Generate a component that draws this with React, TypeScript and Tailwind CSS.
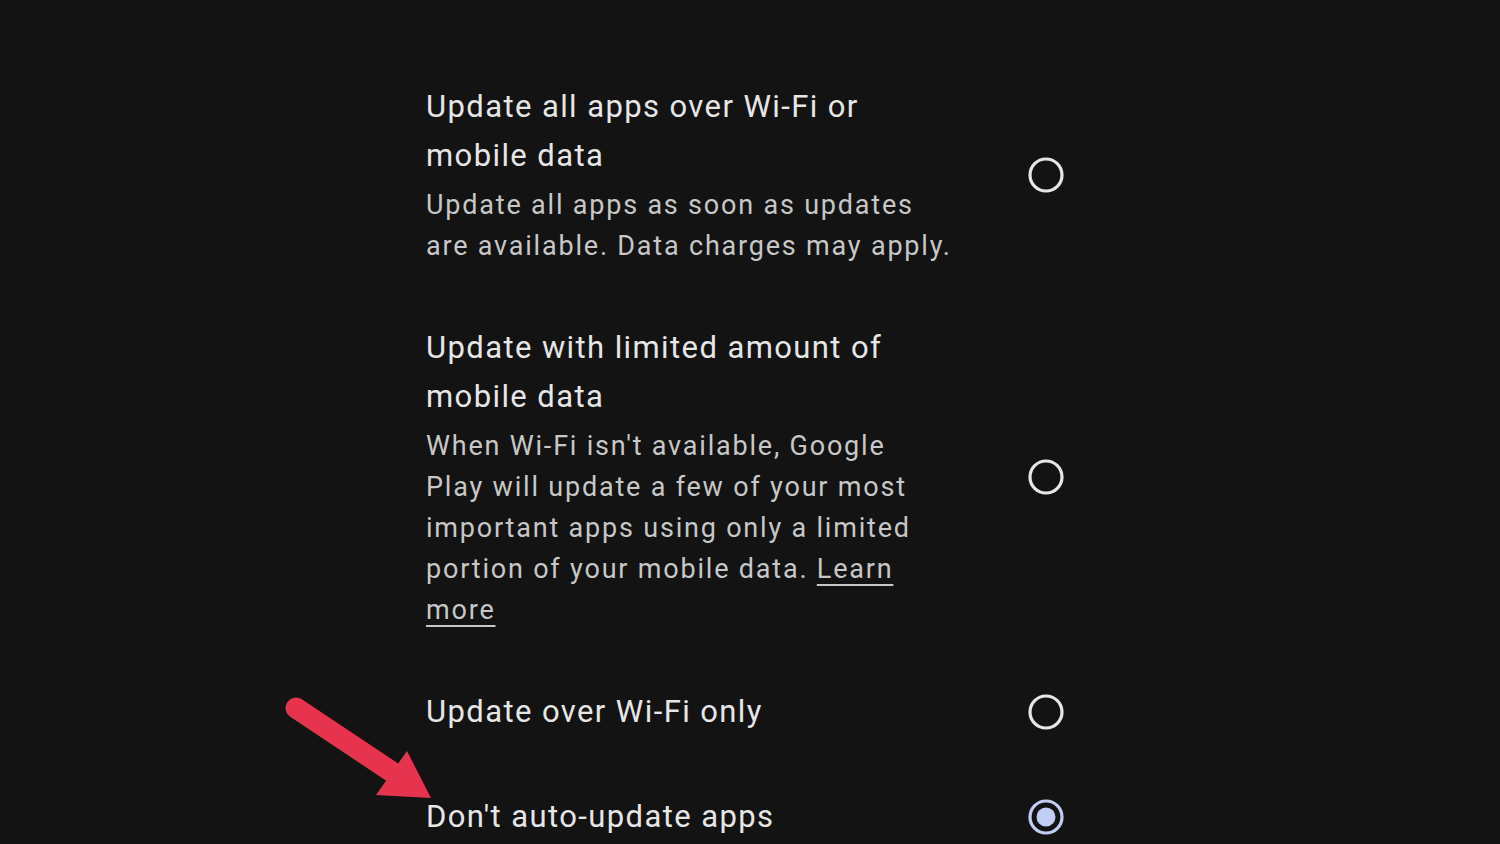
import React from 'react';

type Option = {
  title: React.ReactNode;
  body?: React.ReactNode;
  selected?: boolean;
};

const options: Option[] = [
  {
    title: (
      <>
        Update all apps over Wi-Fi or
        <br />
        mobile data
      </>
    ),
    body: (
      <>
        Update all apps as soon as updates
        <br />
        are available. Data charges may apply.
      </>
    ),
  },
  {
    title: (
      <>
        Update with limited amount of
        <br />
        mobile data
      </>
    ),
    body: (
      <>
        When Wi-Fi isn't available, Google
        <br />
        Play will update a few of your most
        <br />
        important apps using only a limited
        <br />
        portion of your mobile data. <span className="underline underline-offset-[6px] decoration-2">Learn</span>
        <br />
        <span className="underline underline-offset-[6px] decoration-2">more</span>
      </>
    ),
  },
  { title: 'Update over Wi-Fi only' },
  { title: "Don't auto-update apps", selected: true },
];

const Radio: React.FC<{ selected?: boolean }> = ({ selected }) => (
  <svg width="40" height="40" viewBox="0 0 40 40" className="shrink-0">
    <circle cx="20" cy="20" r="16" fill="none" stroke={selected ? '#c2cdf6' : '#e6e6e6'} strokeWidth="3.2" />
    {selected && <circle cx="20" cy="20" r="9.5" fill="#c2cdf6" />}
  </svg>
);

const App: React.FC = () => {
  return (
    <div
      className="relative w-[1500px] h-[844px] overflow-hidden bg-[#131313]"
      style={{ fontFamily: 'Roboto, "Open Sans", sans-serif' }}
    >
      <div className="flex flex-col gap-[56px] pt-[82px] pl-[426px]">
        {options.map((opt, i) => (
          <div key={i} className="flex items-center w-[640px]">
            <div className="flex-1">
              <div className="text-[31px] leading-[49px] tracking-[1.4px] text-[#e6e6e6]">{opt.title}</div>
              {opt.body && (
                <div className="mt-[5px] text-[27px] leading-[41px] tracking-[1.8px] text-[#c7c7c7]">{opt.body}</div>
              )}
            </div>
            <Radio selected={opt.selected} />
          </div>
        ))}
      </div>

      <svg className="absolute left-0 top-0" width="1500" height="844" viewBox="0 0 1500 844">
        <line x1="296" y1="708" x2="392" y2="772" stroke="#e6344f" strokeWidth="21" strokeLinecap="round" />
        <polygon points="407,751 431,798 376,795" fill="#e6344f" />
      </svg>
    </div>
  );
};

export default App;
